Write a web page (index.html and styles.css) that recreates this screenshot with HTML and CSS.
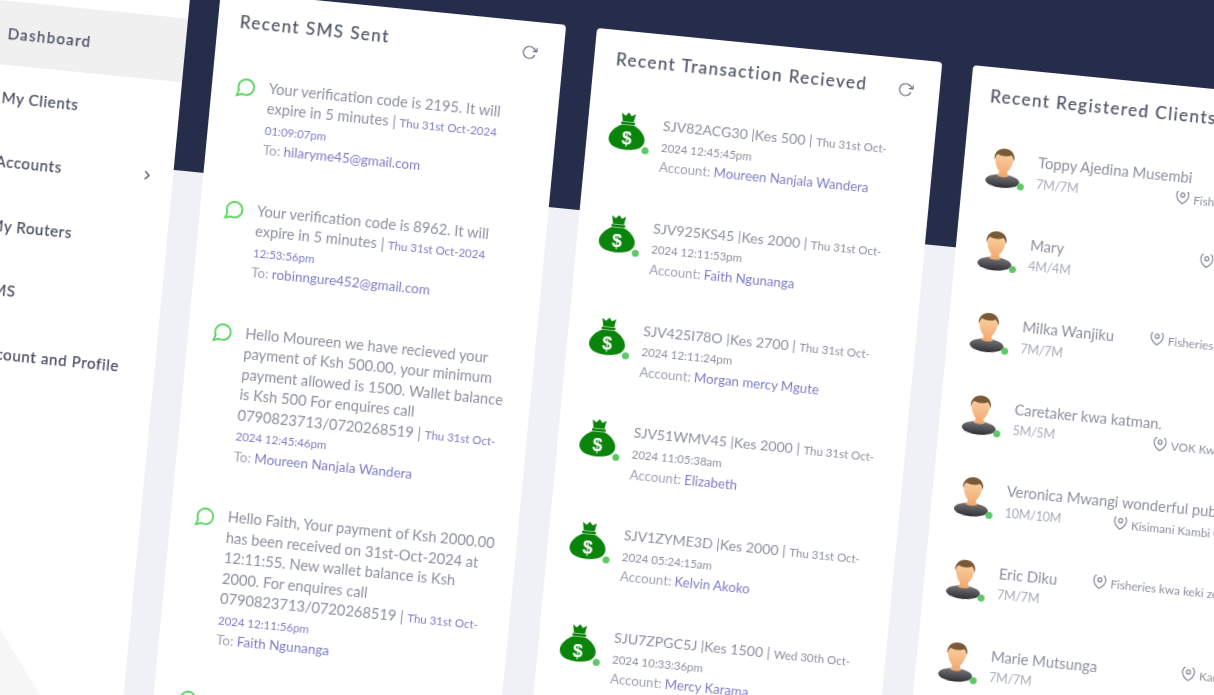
FILE: index.html
```html
<!DOCTYPE html>
<html lang="en">
<head>
<meta charset="utf-8">
<title>Dashboard</title>
<link rel="stylesheet" href="styles.css">
</head>
<body>
<svg class="defs" width="0" height="0" aria-hidden="true">
  <defs>
    <symbol id="chat" viewBox="0 0 24 24"><path d="M21 11.5a8.38 8.38 0 0 1-.9 3.8 8.5 8.5 0 0 1-7.6 4.7 8.38 8.38 0 0 1-3.8-.9L3 21l1.9-5.7a8.38 8.38 0 0 1-.9-3.8 8.5 8.5 0 0 1 4.7-7.6 8.38 8.38 0 0 1 3.8-.9h.5a8.48 8.48 0 0 1 8 8v.5z"/></symbol>
    <symbol id="refresh" viewBox="0 0 24 24"><polyline points="23 4 23 10 17 10"/><path d="M20.49 15a9 9 0 1 1-2.12-9.36L23 10"/></symbol>
    <symbol id="pin" viewBox="0 0 24 24"><path d="M21 10c0 7-9 13-9 13s-9-6-9-13a9 9 0 0 1 18 0z"/><circle cx="12" cy="10" r="3"/></symbol>
    <symbol id="bag" viewBox="0 0 36 38">
      <path fill="#0b840b" d="M11 1l4 2.500L18 0l3 3.500L25 1l-1.500 8h-11z"/>
      <rect fill="#0b840b" x="11" y="9.500" width="14" height="2.600" rx="1.200"/>
      <path fill="#0b840b" d="M12.500 12.500h11C30 15 36 21 36 27c0 7-8 10.500-18 10.500S0 34 0 27C0 21 6 15 12.500 12.500z"/>
      <text x="18" y="32.500" text-anchor="middle" class="dollar">$</text>
    </symbol>
    <linearGradient id="shirt" x1="0" y1="0" x2="0" y2="1"><stop offset="0" stop-color="#77777a"/><stop offset="1" stop-color="#2f3034"/></linearGradient>
    <linearGradient id="skin" x1="0" y1="0" x2="0" y2="1"><stop offset="0" stop-color="#fbd3a6"/><stop offset="1" stop-color="#f0a76c"/></linearGradient>
    <symbol id="person" viewBox="0 0 40 42">
      <ellipse cx="20" cy="33.500" rx="17" ry="6.800" fill="url(#shirt)"/>
      <path fill="url(#skin)" d="M11 11c0-5 4-8 9-8s9 3 9 8c0 6-3 11-5 13 0 2 1 3 2 4-3 2-9 2-12 0 1-1 2-2 2-4-2-2-5-7-5-13z"/>
      <path fill="#7a5a36" d="M10 13C9 5 14 1 20 1s11 4 10 12c-1-3-2-5-3.500-6-4 2-9 2-13.500 0C11.500 8 11 10 10 13z"/>
    </symbol>
  </defs>
</svg>

<div class="stage">
  <aside class="sidebar">
    <div class="side-top"></div>
    <nav class="menu">
      <a class="menu-item active">Dashboard</a>
      <a class="menu-item">My Clients</a>
      <a class="menu-item">Accounts<svg class="chev" viewBox="0 0 24 24"><polyline points="9 18 15 12 9 6"/></svg></a>
      <a class="menu-item">My Routers</a>
      <a class="menu-item">SMS</a>
      <a class="menu-item">Account and Profile</a>
    </nav>
    <div class="side-shape"></div>
  </aside>

  <main class="main">
    <section class="card">
      <header class="card-head">
        <h2>Recent SMS Sent</h2>
        <svg class="refresh"><use href="#refresh"/></svg>
      </header>
      <ul class="list sms-list">
        <li class="sms">
          <svg class="chat"><use href="#chat"/></svg>
          <p>Your verification code is 2195. It will<br>expire in 5 minutes | <small>Thu 31st Oct-2024<br>01:09:07pm</small><br><span class="to">To: <b>hilaryme45@gmail.com</b></span></p>
        </li>
        <li class="sms">
          <svg class="chat"><use href="#chat"/></svg>
          <p>Your verification code is 8962. It will<br>expire in 5 minutes | <small>Thu 31st Oct-2024<br>12:53:56pm</small><br><span class="to">To: <b>robinngure452@gmail.com</b></span></p>
        </li>
        <li class="sms">
          <svg class="chat"><use href="#chat"/></svg>
          <p>Hello Moureen we have recieved your<br>payment of Ksh 500.00, your minimum<br>payment allowed is 1500. Wallet balance<br>is Ksh 500 For enquires call<br>0790823713/0720268519 | <small>Thu 31st Oct-<br>2024 12:45:46pm</small><br><span class="to">To: <b>Moureen Nanjala Wandera</b></span></p>
        </li>
        <li class="sms">
          <svg class="chat"><use href="#chat"/></svg>
          <p>Hello Faith, Your payment of Ksh 2000.00<br>has been received on 31st-Oct-2024 at<br>12:11:55. New wallet balance is Ksh<br>2000. For enquires call<br>0790823713/0720268519 | <small>Thu 31st Oct-<br>2024 12:11:56pm</small><br><span class="to">To: <b>Faith Ngunanga</b></span></p>
        </li>
        <li class="sms">
          <svg class="chat"><use href="#chat"/></svg>
          <p>Hello Kelvin, Your payment of Ksh 2000.00</p>
        </li>
      </ul>
    </section>

    <section class="card">
      <header class="card-head">
        <h2>Recent Transaction Recieved</h2>
        <svg class="refresh"><use href="#refresh"/></svg>
      </header>
      <ul class="list trx-list">
        <li class="trx"><div class="bag"><svg><use href="#bag"/></svg><i class="dot"></i></div>
          <p>SJV82ACG30 |Kes 500 | <small>Thu 31st Oct-<br>2024 12:45:45pm</small><br><span class="to">Account: <b>Moureen Nanjala Wandera</b></span></p></li>
        <li class="trx"><div class="bag"><svg><use href="#bag"/></svg><i class="dot"></i></div>
          <p>SJV925KS45 |Kes 2000 | <small>Thu 31st Oct-<br>2024 12:11:53pm</small><br><span class="to">Account: <b>Faith Ngunanga</b></span></p></li>
        <li class="trx"><div class="bag"><svg><use href="#bag"/></svg><i class="dot"></i></div>
          <p>SJV425I78O |Kes 2700 | <small>Thu 31st Oct-<br>2024 12:11:24pm</small><br><span class="to">Account: <b>Morgan mercy Mgute</b></span></p></li>
        <li class="trx"><div class="bag"><svg><use href="#bag"/></svg><i class="dot"></i></div>
          <p>SJV51WMV45 |Kes 2000 | <small>Thu 31st Oct-<br>2024 11:05:38am</small><br><span class="to">Account: <b>Elizabeth</b></span></p></li>
        <li class="trx"><div class="bag"><svg><use href="#bag"/></svg><i class="dot"></i></div>
          <p>SJV1ZYME3D |Kes 2000 | <small>Thu 31st Oct-<br>2024 05:24:15am</small><br><span class="to">Account: <b>Kelvin Akoko</b></span></p></li>
        <li class="trx"><div class="bag"><svg><use href="#bag"/></svg><i class="dot"></i></div>
          <p>SJU7ZPGC5J |Kes 1500 | <small>Wed 30th Oct-<br>2024 10:33:36pm</small><br><span class="to">Account: <b>Mercy Karama</b></span></p></li>
      </ul>
    </section>

    <section class="card">
      <header class="card-head">
        <h2>Recent Registered Clients</h2>
      </header>
      <ul class="list client-list">
        <li class="client"><div class="avatar"><svg><use href="#person"/></svg><i class="dot"></i></div>
          <div class="client-body">
            <div class="line name">Toppy Ajedina Musembi</div>
            <div class="line plan">7M/7M<span class="loc" style="width:112px"><svg class="pin"><use href="#pin"/></svg>Fisheries kwa keki zone</span></div>
          </div></li>
        <li class="client"><div class="avatar"><svg><use href="#person"/></svg><i class="dot"></i></div>
          <div class="client-body">
            <div class="line name">Mary<span class="loc" style="width:82px"><svg class="pin"><use href="#pin"/></svg>Fisheries</span></div>
            <div class="line plan">4M/4M</div>
          </div></li>
        <li class="client"><div class="avatar"><svg><use href="#person"/></svg><i class="dot"></i></div>
          <div class="client-body">
            <div class="line name">Milka Wanjiku<span class="loc" style="width:124px"><svg class="pin"><use href="#pin"/></svg>Fisheries kwa keki zone</span></div>
            <div class="line plan">7M/7M</div>
          </div></li>
        <li class="client"><div class="avatar"><svg><use href="#person"/></svg><i class="dot"></i></div>
          <div class="client-body">
            <div class="line name">Caretaker kwa katman.</div>
            <div class="line plan">5M/5M<span class="loc" style="width:111px"><svg class="pin"><use href="#pin"/></svg>VOK Kwa Katman</span></div>
          </div></li>
        <li class="client"><div class="avatar"><svg><use href="#person"/></svg><i class="dot"></i></div>
          <div class="client-body">
            <div class="line name">Veronica Mwangi wonderful pub</div>
            <div class="line plan">10M/10M<span class="loc" style="width:143px"><svg class="pin"><use href="#pin"/></svg>Kisimani Kambi ya Nyoka</span></div>
          </div></li>
        <li class="client"><div class="avatar"><svg><use href="#person"/></svg><i class="dot"></i></div>
          <div class="client-body">
            <div class="line name">Eric Diku<span class="loc" style="width:158px"><svg class="pin"><use href="#pin"/></svg>Fisheries kwa keki zone</span></div>
            <div class="line plan">7M/7M</div>
          </div></li>
        <li class="client"><div class="avatar"><svg><use href="#person"/></svg><i class="dot"></i></div>
          <div class="client-body">
            <div class="line name">Marie Mutsunga<span class="loc" style="width:61px"><svg class="pin"><use href="#pin"/></svg>Kariobangi</span></div>
            <div class="line plan">7M/7M</div>
          </div></li>
      </ul>
    </section>
  </main>
</div>
</body>
</html>
```

FILE: styles.css
```css
* { box-sizing: border-box; }
html, body { margin: 0; height: 100%; overflow: hidden; background: #fff; }
body { font-family: "Lato", "Liberation Sans", sans-serif; color: #8d919c; }
.defs { position: absolute; }
.dollar { fill: #fff; font: 700 18px "Liberation Sans", sans-serif; }

/* The whole screenshot is a tilted picture of the app */
.stage {
  position: absolute;
  left: 0;
  top: 0;
  width: 1400px;
  height: 900px;
  display: flex;
  transform-origin: 0 0;
  transform: matrix(.9951, .0985, -.0950, .9955, 0, 0) translateY(-130px);
  filter: blur(.45px);
}

.sidebar { position: relative; width: 189px; flex: none; background: #fff; overflow: hidden; }
.side-top { height: 130px; }
.menu { display: flex; flex-direction: column; }
.menu-item {
  position: relative;
  z-index: 1;
  height: 64px;
  padding-left: 11px;
  display: flex;
  align-items: center;
  font-size: 15px;
  letter-spacing: .7px;
  color: #4b5064;
  -webkit-text-stroke: .25px #4b5064;
}
.menu-item.active { background: #f0f0f0; letter-spacing: 1.4px; }
.chev {
  position: absolute;
  left: 155px;
  top: 24px;
  width: 16px;
  height: 16px;
  fill: none;
  stroke: #4b5064;
  stroke-width: 2;
}
.side-shape {
  position: absolute;
  left: 0;
  top: 676px;
  width: 189px;
  height: 253px;
  background: #f6f6f7;
  clip-path: polygon(0 0, 100% 100%, 0 100%);
}

.main {
  flex: 1;
  display: flex;
  gap: 31px;
  padding: 99px 0 0 30px;
  background: linear-gradient(#252d4a 282px, #f0f1f6 282px);
}
.card { width: 347px; flex: none; background: #fff; border-radius: 4px 4px 0 0; }
.card-head { position: relative; height: 58px; padding: 18px 22px 0; }
.card:last-child .card-head { padding-left: 20px; }
.card-head h2 {
  margin: 0;
  font-size: 17px;
  line-height: 22px;
  font-weight: 400;
  letter-spacing: 1.5px;
  color: #555a6b;
  -webkit-text-stroke: .25px #555a6b;
}
.refresh {
  position: absolute;
  right: 26px;
  top: 23px;
  width: 16px;
  height: 16px;
  fill: none;
  stroke: #666b7a;
  stroke-width: 1.7;
}

.list { margin: 0; padding: 0; list-style: none; }
small { font-size: 11.5px; line-height: 1; }
b { font-weight: 400; color: #7d7dc8; }
.to { color: #a0a4b0; line-height: 1; }

.sms-list { padding: 23.5px 10px 0 23px; }
.sms { display: flex; margin-bottom: 41px; }
.sms p { margin: 0 0 0 12px; font-size: 14.7px; line-height: 20.5px; white-space: nowrap; }
.sms small { color: #7d7dc8; }
.sms .to { font-size: 13.5px; }
.chat {
  flex: none;
  width: 22px;
  height: 22px;
  margin-top: 1.5px;
  fill: none;
  stroke: #59d45f;
  stroke-width: 2;
}

.trx-list { padding: 23px 10px 0 22px; }
.trx { display: flex; margin-bottom: 41px; }
.trx p { margin: 0 0 0 17px; font-size: 14.2px; line-height: 20.6px; white-space: nowrap; }
.trx small { color: #8d919c; }
.trx .to { font-size: 13.25px; }
.bag { position: relative; flex: none; width: 36px; height: 38px; }
.bag svg { display: block; width: 36px; height: 38px; }
.dot { position: absolute; width: 7px; height: 7px; border-radius: 50%; background: #5cc866; }
.bag .dot { left: 33.5px; top: 33px; }

.client-list { padding: 21px 22px 0 20px; }
.client { display: flex; height: 82.6px; }
.avatar { position: relative; flex: none; width: 40px; height: 42px; }
.avatar svg { display: block; width: 40px; height: 42px; }
.avatar .dot { left: 35px; top: 34px; }
.client-body { flex: 1; margin-left: 14px; min-width: 0; }
.line { display: flex; height: 22px; align-items: center; white-space: nowrap; }
.name { font-size: 14.8px; color: #8d919c; }
.plan { font-size: 12.5px; letter-spacing: -.2px; color: #a8acb6; }
.loc {
  flex: none;
  margin-left: auto;
  display: flex;
  align-items: center;
  font-size: 11.8px;
  letter-spacing: 0;
  color: #8d919c;
  overflow: hidden;
}
.pin {
  flex: none;
  width: 16px;
  height: 16px;
  margin: -4px 3px 0 0;
  fill: none;
  stroke: #7f8390;
  stroke-width: 1.7;
}
```
